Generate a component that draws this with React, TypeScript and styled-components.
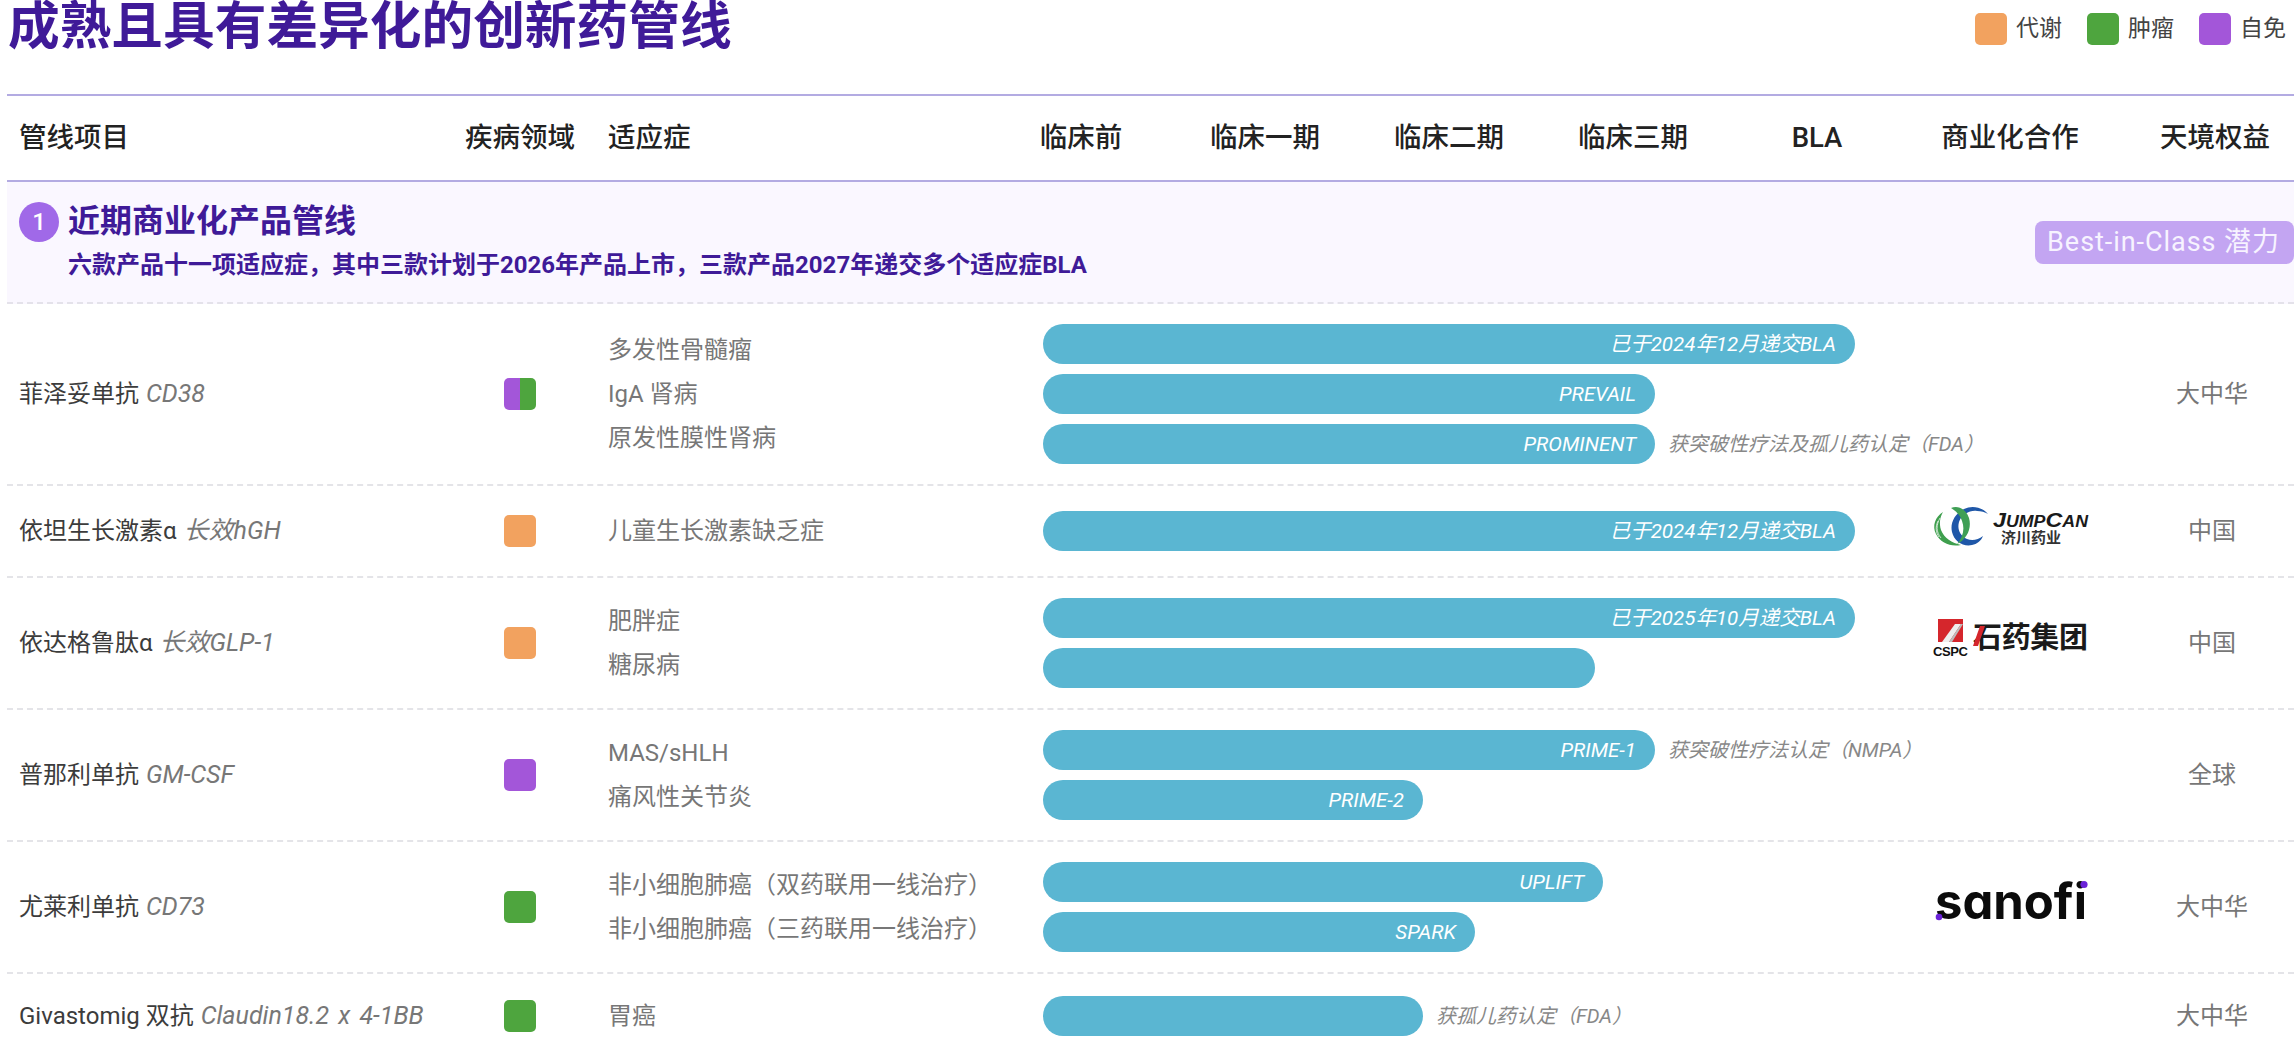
import React from "react";
import styled, { createGlobalStyle } from "styled-components";

const ORANGE = "#f2a25f";
const GREEN = "#4ea53e";
const PURPLE = "#a356d9";

type Bar = { width: number; label?: string; note?: string };
type Row = {
  name: string;
  target: string;
  colors: string[];
  indications: string[];
  bars: Bar[];
  logo?: "jumpcan" | "cspc" | "sanofi";
  rights: string;
};

const stages = ["临床前", "临床一期", "临床二期", "临床三期", "BLA"];

const rows: Row[] = [
  {
    name: "菲泽妥单抗",
    target: "CD38",
    colors: [PURPLE, GREEN],
    indications: ["多发性骨髓瘤", "IgA 肾病", "原发性膜性肾病"],
    bars: [
      { width: 812, label: "已于2024年12月递交BLA" },
      { width: 612, label: "PREVAIL" },
      { width: 612, label: "PROMINENT", note: "获突破性疗法及孤儿药认定（FDA）" },
    ],
    rights: "大中华",
  },
  {
    name: "依坦生长激素α",
    target: "长效hGH",
    colors: [ORANGE],
    indications: ["儿童生长激素缺乏症"],
    bars: [{ width: 812, label: "已于2024年12月递交BLA" }],
    logo: "jumpcan",
    rights: "中国",
  },
  {
    name: "依达格鲁肽α",
    target: "长效GLP-1",
    colors: [ORANGE],
    indications: ["肥胖症", "糖尿病"],
    bars: [{ width: 812, label: "已于2025年10月递交BLA" }, { width: 552 }],
    logo: "cspc",
    rights: "中国",
  },
  {
    name: "普那利单抗",
    target: "GM-CSF",
    colors: [PURPLE],
    indications: ["MAS/sHLH", "痛风性关节炎"],
    bars: [
      { width: 612, label: "PRIME-1", note: "获突破性疗法认定（NMPA）" },
      { width: 380, label: "PRIME-2" },
    ],
    rights: "全球",
  },
  {
    name: "尤莱利单抗",
    target: "CD73",
    colors: [GREEN],
    indications: ["非小细胞肺癌（双药联用一线治疗）", "非小细胞肺癌（三药联用一线治疗）"],
    bars: [
      { width: 560, label: "UPLIFT" },
      { width: 432, label: "SPARK" },
    ],
    logo: "sanofi",
    rights: "大中华",
  },
  {
    name: "Givastomig 双抗",
    target: "Claudin18.2 x 4-1BB",
    colors: [GREEN],
    indications: ["胃癌"],
    bars: [{ width: 380, note: "获孤儿药认定（FDA）" }],
    rights: "大中华",
  },
];

const JumpCanLogo = () => (
  <LogoSvg width="160" height="50" viewBox="0 0 160 50">
    <path d="M13 6 C5 11 2 20 6 28 C11 37 20 41 31 39 C22 37 14 32 11 24 C9 17 10 11 13 6Z" fill="#3f9f4e" />
    <g fill="none" stroke="#fff" strokeWidth="0.7">
      <path d="M10 12 C6 19 6 26 11 32" />
      <path d="M8 15 C5 21 6 27 9 31" />
    </g>
    <path d="M58 8 C52 1 42 -1 34 3 C24 8 20 18 22 26 C24 35 33 41 42 39 C47 38 51 35 53 30 C48 34 42 35 37 33 C30 30 27 23 29 16 C32 8 40 4 47 5 C51 5 55 6 58 8Z" fill="#1f57a8" />
    <path d="M21 2 C28 -1 36 3 39 12 C42 22 37 33 27 38 C33 31 35 23 32 15 C30 9 26 5 21 2Z" fill="#3f9f55" />
    <JumpText x="63" y="21" textLength="95" lengthAdjust="spacingAndGlyphs">
      J<JumpSmall>UMP</JumpSmall>C<JumpSmall>AN</JumpSmall>
    </JumpText>
    <JumpSub x="71" y="37" textLength="60">济川药业</JumpSub>
  </LogoSvg>
);

const CspcLogo = () => (
  <LogoSvg width="160" height="50" viewBox="0 0 160 50">
    <rect x="8" y="1" width="25" height="23" fill="#d5262c" />
    <path d="M12 24 L25 6 L31 6 L19 24 Z" fill="#eeeeee" />
    <path d="M19 24 L31 6 L33 6 L22 24 Z" fill="#bdbdbd" />
    <CspcText x="3" y="38" textLength="35">CSPC</CspcText>
    <CspcName x="43" y="30" textLength="115">石药集团</CspcName>
    <path d="M50 8 L55 8 L48 28 L43 28 Z" fill="#d5262c" />
  </LogoSvg>
);

const SanofiLogo = () => (
  <LogoSvg width="160" height="50" viewBox="0 0 160 50">
    <SanofiText x="5" y="37" textLength="152">sanofi</SanofiText>
    <circle cx="9" cy="35" r="3.3" fill="#6a22d8" />
    <circle cx="154" cy="2.5" r="3.6" fill="#6a22d8" />
  </LogoSvg>
);

const logos = { jumpcan: JumpCanLogo, cspc: CspcLogo, sanofi: SanofiLogo };

export default function App() {
  return (
    <Page>
      <GlobalStyle />
      <TopBar>
        <Title>成熟且具有差异化的创新药管线</Title>
        <Legend>
          <LegendItem><Swatch $colors={[ORANGE]} />代谢</LegendItem>
          <LegendItem><Swatch $colors={[GREEN]} />肿瘤</LegendItem>
          <LegendItem><Swatch $colors={[PURPLE]} />自免</LegendItem>
        </Legend>
      </TopBar>

      <Table>
        <HeaderRow>
          <HeaderCell>管线项目</HeaderCell>
          <HeaderCell $center>疾病领域</HeaderCell>
          <HeaderCell $indent>适应症</HeaderCell>
          {stages.map((s) => (
            <HeaderCell $center key={s}>{s}</HeaderCell>
          ))}
          <HeaderCell $center>商业化合作</HeaderCell>
          <HeaderCell $center $right>天境权益</HeaderCell>
        </HeaderRow>

        <SectionBand>
          <div>
            <SectionTitleRow>
              <NumberDot>1</NumberDot>
              <SectionTitle>近期商业化产品管线</SectionTitle>
            </SectionTitleRow>
            <SectionSub>六款产品十一项适应症，其中三款计划于2026年产品上市，三款产品2027年递交多个适应症BLA</SectionSub>
          </div>
          <Badge>Best-in-Class 潜力</Badge>
        </SectionBand>

        {rows.map((row) => {
          const Logo = row.logo ? logos[row.logo] : null;
          return (
            <DataRow key={row.name}>
              <NameCell>
                {row.name} <Target>{row.target}</Target>
              </NameCell>
              <AreaCell>
                <Swatch $colors={row.colors} />
              </AreaCell>
              <IndicationList>
                {row.indications.map((item) => (
                  <Indication key={item}>{item}</Indication>
                ))}
              </IndicationList>
              <BarList>
                {row.bars.map((bar, i) => (
                  <BarLine key={i}>
                    <PipelineBar style={{ width: bar.width }}>{bar.label}</PipelineBar>
                    {bar.note && <BarNote>{bar.note}</BarNote>}
                  </BarLine>
                ))}
              </BarList>
              <PartnerCell>{Logo && <Logo />}</PartnerCell>
              <RightsCell>{row.rights}</RightsCell>
            </DataRow>
          );
        })}
      </Table>
    </Page>
  );
}

/* ================= styled ================= */

const GlobalStyle = createGlobalStyle`
  html, body {
    margin: 0;
    padding: 0;
    background: #fff;
    overflow: hidden;
  }
  body {
    font-family: Roboto, "Noto Sans CJK SC", sans-serif;
  }
`;

const Page = styled.div`
  width: 2294px;
  height: 1052px;
  overflow: hidden;
  padding-left: 7px;
  box-sizing: border-box;
`;

const TopBar = styled.div`
  height: 94px;
  display: flex;
  justify-content: space-between;
  align-items: flex-start;
  padding-right: 8px;
`;

const Title = styled.h1`
  margin: 0;
  padding-left: 1px;
  font-size: 51.7px;
  line-height: 54px;
  font-weight: 700;
  color: #3f1a98;
`;

const Legend = styled.div`
  display: flex;
  gap: 25px;
  margin-top: 13px;
`;

const LegendItem = styled.div`
  display: flex;
  align-items: center;
  gap: 9px;
  font-size: 23px;
  line-height: 32px;
  color: #444;
`;

const Swatch = styled.span<{ $colors: string[] }>`
  display: block;
  width: 32px;
  height: 32px;
  border-radius: 5px;
  background: ${(p) =>
    p.$colors.length > 1
      ? `linear-gradient(90deg, ${p.$colors[0]} 50%, ${p.$colors[1]} 50%)`
      : p.$colors[0]};
`;

const Table = styled.div`
  border-top: 2px solid #b3abe2;
`;

const HeaderRow = styled.div`
  display: grid;
  grid-template-columns: 453px 120px 409px repeat(5, 184px) 202px 176px;
  height: 84px;
  align-items: center;
  border-bottom: 2px solid #b3abe2;
`;

const HeaderCell = styled.div<{ $center?: boolean; $indent?: boolean; $right?: boolean }>`
  font-size: 27.5px;
  line-height: 40px;
  margin-top: -1px;
  font-weight: 500;
  color: #222;
  white-space: nowrap;
  text-align: ${(p) => (p.$center ? "center" : "left")};
  padding-left: ${(p) => (p.$right ? "32px" : p.$indent ? "28px" : p.$center ? "0" : "12px")};
`;

const SectionBand = styled.div`
  display: flex;
  justify-content: space-between;
  align-items: center;
  height: 120px;
  padding-left: 12px;
  background: #faf7ff;
  border-bottom: 2px dashed #e4e2ea;
`;

const SectionTitleRow = styled.div`
  display: flex;
  align-items: center;
  gap: 9px;
`;

const NumberDot = styled.span`
  width: 40px;
  height: 40px;
  border-radius: 50%;
  background: #a069e8;
  color: #fff;
  font-size: 24px;
  font-weight: 500;
  display: flex;
  align-items: center;
  justify-content: center;
`;

const SectionTitle = styled.div`
  font-size: 32px;
  line-height: 40px;
  margin-top: -2px;
  font-weight: 700;
  color: #3f1a98;
`;

const SectionSub = styled.div`
  margin: 5px 0 0 49px;
  font-size: 24px;
  line-height: 36px;
  font-weight: 700;
  color: #3f1a98;
`;

const Badge = styled.div`
  height: 43px;
  line-height: 43px;
  padding: 0 14px 0 12px;
  border-radius: 8px;
  background: #c3a5f2;
  color: #f7f3ff;
  font-size: 27px;
  letter-spacing: 0.95px;
  white-space: nowrap;
`;

const DataRow = styled.div`
  display: grid;
  grid-template-columns: 453px 120px 463px 866px 202px 176px;
  align-items: center;
  padding: 20px 0;
  border-bottom: 2px dashed #e4e4e8;
`;

const NameCell = styled.div`
  padding-left: 12px;
  font-size: 24px;
  line-height: 44px;
  color: #3c3c3c;
  white-space: nowrap;
`;

const Target = styled.span`
  margin-left: 1px;
  font-size: 25px;
  font-style: italic;
  word-spacing: 3px;
  color: #777;
`;

const AreaCell = styled.div`
  display: flex;
  justify-content: center;
`;

const IndicationList = styled.div`
  padding-left: 28px;
`;

const Indication = styled.div`
  font-size: 24px;
  line-height: 44px;
  color: #777;
  white-space: nowrap;
`;

const BarList = styled.div`
  display: flex;
  flex-direction: column;
  gap: 10px;
`;

const BarLine = styled.div`
  display: flex;
  align-items: center;
  gap: 13px;
`;

const PipelineBar = styled.div`
  height: 40px;
  line-height: 40px;
  flex-shrink: 0;
  box-sizing: border-box;
  padding-right: 19px;
  border-radius: 20px;
  background: #5ab6d2;
  color: #fff;
  font-size: 20.5px;
  font-style: italic;
  text-align: right;
  white-space: nowrap;
`;

const BarNote = styled.div`
  font-size: 20px;
  line-height: 40px;
  font-style: italic;
  color: #888;
  white-space: nowrap;
`;

const PartnerCell = styled.div`
  display: flex;
  justify-content: center;
`;

const LogoSvg = styled.svg`
  display: block;
  overflow: visible;
`;

const RightsCell = styled.div`
  padding-left: 26px;
  text-align: center;
  font-size: 24px;
  line-height: 44px;
  color: #777;
`;

const JumpText = styled.text`
  font-family: "Liberation Sans", sans-serif;
  font-size: 21px;
  font-weight: 700;
  font-style: italic;
  fill: #1a1a1a;
`;

const JumpSmall = styled.tspan`
  font-size: 16px;
`;

const JumpSub = styled.text`
  font-family: "Noto Sans CJK SC", sans-serif;
  font-size: 15px;
  font-weight: 700;
  fill: #333;
`;

const CspcText = styled.text`
  font-family: "Liberation Sans", sans-serif;
  font-size: 13px;
  font-weight: 700;
  fill: #111;
`;

const CspcName = styled.text`
  font-family: "Noto Sans CJK SC", sans-serif;
  font-size: 29px;
  font-weight: 700;
  fill: #1a1a1a;
`;

const SanofiText = styled.text`
  font-family: Inter, sans-serif;
  font-feature-settings: "cv11";
  font-size: 49px;
  font-weight: 700;
  fill: #0b0b0b;
`;
